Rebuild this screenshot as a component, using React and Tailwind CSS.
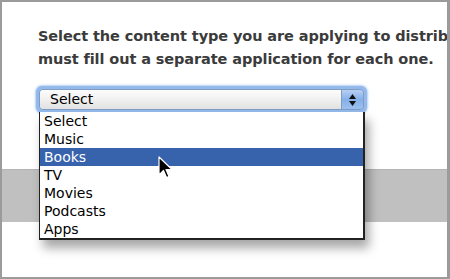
export default function App() {
  const items = ["Select", "Music", "Books", "TV", "Movies", "Podcasts", "Apps"];

  return (
    <div className="w-[450px] h-[279px] bg-white border-[#9b9b9b] border-l-2 border-t-2 border-r-[3px] border-b-2 overflow-hidden relative font-['DejaVu_Sans',sans-serif]">
      {/* Heading */}
      <div className="pt-[23px] pl-[36px] text-[14.5px] leading-[23px] font-bold text-[#3b3b3b] whitespace-nowrap tracking-[-0.1px]">
        <div>Select the content type you are applying to distribute. You</div>
        <div>must fill out a separate application for each one.</div>
      </div>

      {/* Select with open menu */}
      <div className="relative mt-[15px] ml-[34px] w-[331px] h-[27px] rounded-[6px] p-[3px] bg-[#94baec] shadow-[0_0_3px_#6a9ee6] z-10">
        <div className="flex h-full rounded-[4px] border border-[#7f9cc5] overflow-hidden">
          <div className="flex-1 flex items-center pl-[10px] bg-gradient-to-b from-[#fdfdfd] via-[#f0f0f0] to-[#e2e2e2] text-[14px] text-black">
            Select
          </div>
          <div className="w-[22px] flex flex-col items-center justify-center gap-[2px] border-l border-[#7f9cc5] bg-gradient-to-b from-[#b6d0f2] via-[#86b0ea] to-[#9cc0ef]">
            <svg width="7" height="5" viewBox="0 0 7 5"><path d="M3.5 0L7 5H0z" fill="#111" /></svg>
            <svg width="7" height="5" viewBox="0 0 7 5"><path d="M0 0h7L3.5 5z" fill="#111" /></svg>
          </div>
        </div>

        {/* Menu */}
        <div className="absolute left-[3px] top-[26px] w-[326px] bg-white border border-t-0 border-[#222] border-b-2 border-r-2 shadow-[4px_8px_10px_rgba(0,0,0,0.35)]">
          {items.map((it) => (
            <div
              key={it}
              className={`h-[18px] leading-[18px] pl-[4px] text-[14px] ${
                it === "Books" ? "bg-[#3763ad] text-white" : "text-black"
              }`}
            >
              {it}
            </div>
          ))}
        </div>

        {/* Cursor */}
        <svg className="absolute left-[122px] top-[70px]" width="16" height="25" viewBox="0 0 16 25">
          <path d="M1 1 L1 19 L5.5 14.5 L8.5 21.5 L11 20.5 L8 13.5 L14 13.5 Z" fill="#000" stroke="#fff" strokeWidth="1.2" strokeLinejoin="round" />
        </svg>
      </div>

      {/* Gray band */}
      <div className="mt-[56px] h-[53px] bg-[#bfc0bf] border-t border-[#b3b4b3]" />
    </div>
  );
}
